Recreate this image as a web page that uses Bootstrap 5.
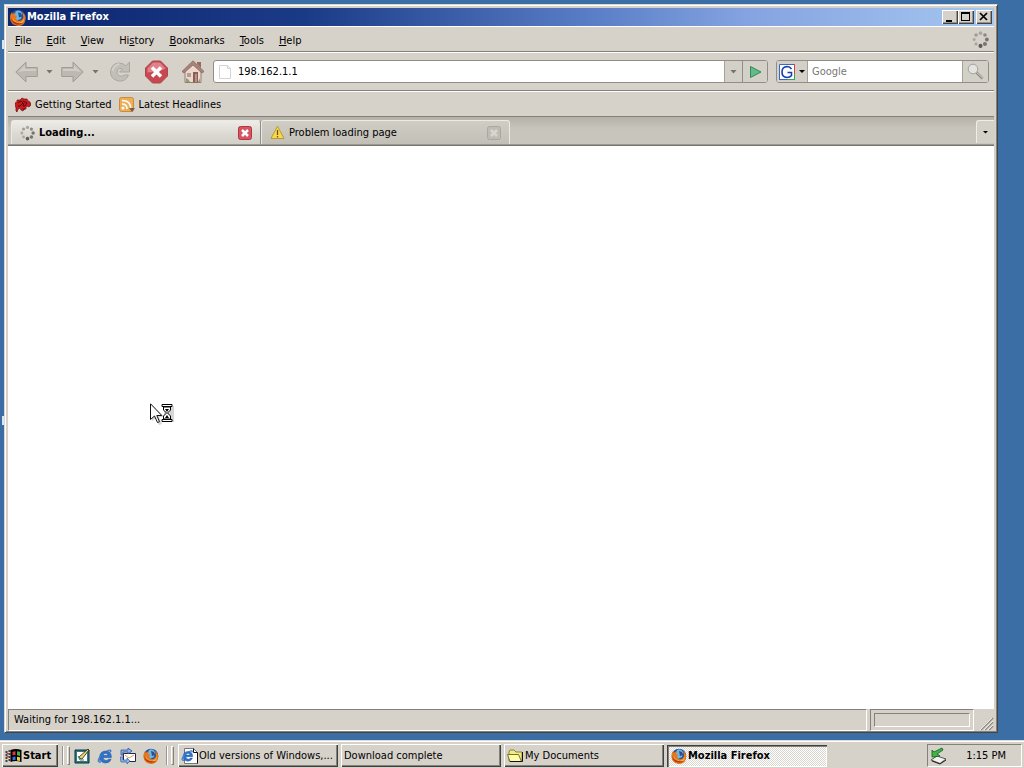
<!DOCTYPE html>
<html lang="en">
<head>
<meta charset="utf-8">
<meta name="viewport" content="width=device-width, initial-scale=1">
<title>Mozilla Firefox</title>
<link rel="stylesheet" href="https://cdn.jsdelivr.net/npm/bootstrap@5.3.0/dist/css/bootstrap.min.css">
<style>
:root{--face:#d6d2ca;--shade:#84817b;--dark:#444;--desk:#3a6ea5}
body{background:var(--desk);font:11px/14px "DejaVu Sans Condensed","DejaVu Sans",sans-serif;color:#000;overflow:hidden}
button,input{font:inherit;color:inherit;border:0;border-radius:0;padding:0;background:none}
button{white-space:nowrap}
a{color:inherit;text-decoration:none}
svg{display:block;flex:none}
.bold-ui{font-weight:700;font-size:11px}
.desktop{padding:4px 26px 7px 4px;min-height:0}
.desk-label{left:2px;width:2px;height:9px;background:#dce6f2}
.label-top{top:40px}
.label-mid{top:416px}
.app-window{background:var(--face);border:1px solid;border-color:#dcd9d2 var(--dark) var(--dark) #dcd9d2;box-shadow:inset 1px 1px #fff,inset -1px -1px var(--shade);padding:3px 3px 1px;min-height:0}
.titlebar{height:18px;background:linear-gradient(90deg,#0c2670,#1b3a86 30%,#5b80c8 60%,#85a3e0 75%,#a5c7f0);color:#fff;padding:0 2px 0 1px}
.winbtn{width:16px;height:14px;background:var(--face);box-shadow:inset 1px 1px #fff,inset -1px -1px var(--dark),inset -2px -2px #98948c}
.winbtn-max{margin-right:2px}
.menubar{height:26px;padding:4px 5px 0 7px;gap:15px;border-top:1px solid #fff;border-bottom:1px solid var(--shade)}
.tools{height:39px;padding:0 5px 0 7px;border-top:1px solid #fff;border-bottom:1px solid var(--shade)}
.caret-d{width:7px;height:4px;background:#000;clip-path:polygon(0 0,100% 0,50% 100%)}
.caret-s{width:6px;height:3px}
.caret-g{background:#77746e}
.field{height:23px;border:1px solid #918e87;border-radius:3px;background:#fff;overflow:hidden}
.field button{background:#d3d0c8}
.field input{outline:0;min-width:0;padding-top:1px}
.address{padding-left:6px}
.field input::placeholder{color:#777;opacity:1}
.drop{width:18px;border-left:1px solid #a5a29b}
.go{width:25px;border-left:1px solid #918e87}
.search{width:213px}
.engine{width:31px;border-right:1px solid #a5a29b}
.glass{width:26px;border-left:1px solid #a5a29b}
.bookbar{height:26px;padding:2px 7px 0;gap:7px;border-top:1px solid #fff;border-bottom:1px solid var(--shade)}
.tabstrip{height:29px;background:linear-gradient(#b5b1a9,#c7c4bb 40%,#c9c6be);border-bottom:1px solid #77746e;padding:3px 0 0 3px}
.page-tab{height:24px;border:1px solid #eceae5;border-bottom:0;border-radius:3px 3px 0 0;padding:0 8px}
.tab-on{width:250px;background:linear-gradient(#eeece8,#dbd8d1 60%,#d3d0c9);border-right-color:#908d86}
.tab-off{width:249px;background:linear-gradient(#d0cdc5,#c2bfb7)}
.tab-menu{width:18px;height:23px;border:1px solid #efede9;border-width:1px 0 0 1px;border-radius:3px 0 0 0;background:#d3d0c8}
.tab-base{height:3px;border-bottom:1px solid #77746e;margin-left:-3px;background:#d4d0c8;border-top:1px solid #9c9992}
.viewport{background:#fff;min-height:0}
.pointer{left:142px;top:257px}
.statusbar{height:22px;gap:3px}
.pane{border:1px solid;border-color:var(--shade) #fff #fff var(--shade)}
.status-text{padding-left:5px}
.progress-pane{width:104px;padding:3px}
.grip{width:17px}
.taskbar{height:28px;background:var(--face);border-top:1px solid #e0ddd6;box-shadow:inset 0 1px #fff;padding:3px 2px 1px}
.raised{height:23px;background:var(--face);box-shadow:inset 1px 1px #fff,inset -1px -1px #404040,inset -2px -2px var(--shade)}
.start{width:56px;padding:0 3px}
.quick{gap:7px;margin-right:7px}
.tasks{gap:3px}
.task{width:160px;padding:0 3px}
.pressed{height:22px;background:repeating-conic-gradient(#fff 0 25%,#d9d6d0 0 50%) 0 0/2px 2px;box-shadow:inset 1px 1px #404040,inset 2px 2px var(--shade),inset -1px -1px #fff}
.divider{width:2px;height:19px;border-left:1px solid #99958e;border-right:1px solid #fff}
.handle{width:3px;height:19px;margin:0 4px 0 3px;border:1px solid #fff;border-right-color:var(--shade);border-bottom-color:var(--shade)}
.tray{width:95px;height:23px;padding:0 15px 0 2px}
</style>
</head>
<body class="vh-100 d-flex flex-column">
<svg width="0" height="0" class="position-absolute" aria-hidden="true">
<defs>
<symbol id="fox" viewBox="0 0 16 16">
<circle cx="8" cy="8" r="7.3" fill="#28539b"/><path d="M6 2q4-2 6 2l-1 5-4 2-3-4z" fill="#6cb6df"/><path d="M8 3l3 1 1 3-3 1z" fill="#294f91"/>
<path d="M2 3l1 2q1-2 3-1L5 6l2 1-1 2q1 3 4 2 3-1 3-4l-1-4q4 3 3 7-1 6-7 6Q1 15 .5 9 .4 5 2 3z" fill="#e7771b"/>
<path d="M13 5q2 3-.5 6-3 3-6 1-3-1-3-4-1 4 3 6 5 1 7-3 1-4-.5-6z" fill="#f8bc43"/><path d="M1 7q0 5 4 7 5 2 8-1-5 1-8-1Q1 10 1 7z" fill="#ba3714"/>
</symbol>
<symbol id="spin" viewBox="0 0 16 16"><g fill="#77756f"><circle cx="8" cy="2" r="1.7" fill="#aaa7a1"/><circle cx="12.2" cy="3.8" r="1.7" fill="#8c8983"/><circle cx="14" cy="8" r="1.8"/><circle cx="12.2" cy="12.2" r="1.9"/><circle cx="8" cy="14" r="1.9" fill="#5d5b57"/><circle cx="3.8" cy="12.2" r="1.5" fill="#aaa7a1"/><circle cx="2" cy="8" r="1.5" fill="#aaa7a0"/><circle cx="3.8" cy="3.8" r="1.6" fill="#9f9c96"/></g></symbol>
<symbol id="arrow" viewBox="0 0 23 22"><path d="M.8 11L11 1v5.500h11.300v9H11V21z" fill="#bcb9b2" stroke="#a09d97"/><path d="M3 11l7-7v4h11v2H9z" fill="#d0cdc7"/></symbol>
<symbol id="ie" viewBox="0 0 16 16"><path d="M14.400 9.500H6q.4 3 3 3 2 0 2.600-1.300h2.500Q12.800 15 8.500 15 3 14.700 2.600 9 3 3.300 8.500 3q6 .3 5.900 6.500zM6 7.500h5Q10.800 5.300 8.500 5.300 6.300 5.300 6 7.500z" fill="#2d74cf" stroke="#174a9d" stroke-width=".5"/><path d="M13.500 4.300Q15.500 1 11.500 2.200 5 4.300 1.800 10-.5 15.300 4 14 1.500 14.600 2.700 11 6 4.500 11.700 2.800 14 2.200 13.500 4.300z" fill="#57a8e8" stroke="#1c5ab0" stroke-width=".6"/></symbol>
</defs>
</svg>

<main class="desktop position-relative flex-grow-1 d-flex">
<span class="desk-label label-top position-absolute"></span>
<span class="desk-label label-mid position-absolute"></span>
<section class="app-window flex-grow-1 d-flex flex-column position-relative">
<header class="titlebar d-flex align-items-center">
<svg width="18" height="17"><use href="#fox"/></svg><span class="bold-ui me-auto">Mozilla Firefox</span>
<button class="winbtn" aria-label="Minimize"><svg width="16" height="14"><path d="M4 10h6v2H4z"/></svg></button>
<button class="winbtn winbtn-max" aria-label="Maximize"><svg width="16" height="14"><path d="M3 2h9v9H3zM4 4v6h7V4z" fill-rule="evenodd"/></svg></button>
<button class="winbtn" aria-label="Close"><svg width="16" height="14"><path d="M4 3l7 7M11 3l-7 7" stroke="#000" stroke-width="1.700"/></svg></button>
</header>
<nav class="menubar d-flex align-items-center">
<button><u>F</u>ile</button><button><u>E</u>dit</button><button><u>V</u>iew</button><button>Hi<u>s</u>tory</button><button><u>B</u>ookmarks</button><button><u>T</u>ools</button><button><u>H</u>elp</button>
<svg class="ms-auto mb-1" width="17" height="17"><use href="#spin"/></svg>
</nav>
<div class="tools d-flex align-items-center gap-2">
<div class="d-flex align-items-center flex-shrink-0">
<button class="me-2" aria-label="Back"><svg width="23" height="22"><use href="#arrow"/></svg></button>
<button class="me-2" aria-label="Back history"><span class="caret-d caret-g d-block"></span></button>
<button class="me-2" aria-label="Forward"><svg width="23" height="22"><use href="#arrow" transform="matrix(-1 0 0 1 23 0)"/></svg></button>
<button class="me-2" aria-label="Forward history"><span class="caret-d caret-g d-block"></span></button>
<button class="me-2 pe-1" aria-label="Reload"><svg width="25" height="24" viewBox="0 0 24 24"><path d="M16 4l2 2 4-4v10H12l3-3q-3-2-5 1-2 4 2 6 3 1 5-1h4q-3 7-10 6-8-2-8-9 1-9 9-9z" fill="#c2bfb8" stroke="#aaa7a0"/><path d="M5 11q1-6 7-7" stroke="#d2cfc9" fill="none" stroke-width="2"/></svg></button>
<button class="me-2 pe-1" aria-label="Stop"><svg width="25" height="24" viewBox="0 0 24 24"><path d="M8 1h8l7 7v8l-7 7H8l-7-7V8z" fill="#c9474f" stroke="#a84a50"/><path d="M8.500 2.500h7L21 8.500q-6 3-18 4v-4z" fill="#df8388"/><path d="M7.500 7.500l9 9M16.500 7.500l-9 9" stroke="#fff" stroke-width="3.500"/></svg></button>
<button aria-label="Home"><svg width="24" height="24" viewBox="0 0 24 24"><path d="M4 10l8-8 8 8v12.500H4z" fill="#ecd8cf" stroke="#947c72"/><path d="M16 2h4v6l-4-4z" fill="#986a5f"/><path d="M1 11.500L12 .8l11 10.700-2 1.500-9-8-9 8z" fill="#a98479" stroke="#7c605a" stroke-width=".7"/><path d="M6 13h4v4H6z" fill="#b79a90"/><path d="M12 12h5v10.500h-5z" fill="#8b5f57"/><path d="M14 14h2v8h-2z" fill="#ba9185"/><path d="M5 22v-4q3 1 4 4zM19 22v-4l-2 4z" fill="#89a36f"/></svg></button>
</div>
<div class="field flex-grow-1 d-flex">
<svg class="ms-1 my-1" width="14" height="14"><path d="M1.500.5h8l3 3v10h-11zM9.500.5v3h3" fill="#fff" stroke="#d5d3d3"/></svg>
<input class="address flex-grow-1" aria-label="Address" value="198.162.1.1">
<button class="drop d-flex align-items-center justify-content-center" aria-label="Show addresses"><span class="caret-d caret-g"></span></button>
<button class="go d-flex align-items-center justify-content-center" aria-label="Go"><svg width="13" height="14"><path d="M1.500 1.500L12 7 1.500 12.500z" fill="#62bd85" stroke="#33875a"/></svg></button>
</div>
<div class="field search d-flex">
<button class="engine d-flex align-items-center justify-content-center gap-1" aria-label="Search engine"><svg width="16" height="16"><path fill="#fff" d="M0 0h16v16H0z"/><path d="M.5 16V.5H16" stroke="#3966c4" fill="none"/><path d="M15.500 0v10" stroke="#ce4437"/><path d="M15.500 10v6M8 15.500h8" stroke="#37a25a"/><path d="M0 15.500h8" stroke="#3966c4"/><path d="M12.500 5Q11 2.500 8 2.500 3 2.800 3 8q0 5.200 5 5.500 3 0 4.500-2V8.500H8.500" stroke="#1d3eaa" stroke-width="1.600" fill="none"/></svg><span class="caret-d caret-s"></span></button>
<input class="flex-grow-1 ps-1" aria-label="Search" placeholder="Google">
<button class="glass d-flex align-items-center justify-content-center" aria-label="Search"><svg width="17" height="17"><path d="M9.500 9.500l6 6" stroke="#8c8984" stroke-width="2.500"/><path d="M10 9.500l5.500 5.500" stroke="#dedcd8"/><circle cx="6" cy="6" r="4.800" fill="#e4e3e0" stroke="#a4a19d"/></svg></button>
</div>
</div>
<nav class="bookbar d-flex align-items-center">
<a href="#" class="d-flex align-items-center"><svg class="me-1" width="16" height="16" viewBox="0 0 16 16"><path d="M0 6l2-1 0-2 3 0L7 1l2 1 3 0 1 2 2 1 1 3-2 2-2-1-1 1 0 2-2 0-1 2-2-1-1-2-2 1-1 3-1-1 0-4-2-1 1-2z" fill="#ca1c20" stroke="#6c1012" stroke-width=".7"/><path d="M3 6l3-2 2 2-3 3-2 0M8 4l4 2-2 3-2 0 1-3M9 11v2" stroke="#550b0c" fill="none"/></svg>Getting Started</a>
<a href="#" class="d-flex align-items-center"><svg class="me-1" width="16" height="16" viewBox="0 0 16 16"><rect x=".5" y=".5" width="14" height="14" rx="2" fill="#edae55" stroke="#cb8a3c"/><circle cx="4" cy="11" r="1.500" fill="#fff"/><path d="M3 7q5 0 5 5M3 3.500q9 0 8.700 8.500" stroke="#fff" stroke-width="1.700" fill="none"/><path d="M10 11h6l-3 4z" fill="#775c49"/></svg>Latest Headlines</a>
</nav>
<div class="tabstrip d-flex flex-column">
<div class="d-flex">
<button class="page-tab tab-on d-flex align-items-center"><svg class="me-1" width="15" height="16"><use href="#spin"/></svg><span class="bold-ui me-auto">Loading...</span><svg width="14" height="14" role="img" aria-label="Close tab"><rect x=".5" y=".5" width="13" height="13" rx="2" fill="#d65561" stroke="#ae3543"/><path d="M4 4l6 6M10 4l-6 6" stroke="#fff" stroke-width="2.500"/></svg></button>
<button class="page-tab tab-off d-flex align-items-center"><svg class="me-1" width="15" height="15"><path d="M7.500 1.200L14 13.500H1z" fill="#f6da47" stroke="#be9832" stroke-linejoin="round"/><path d="M7.500 5v5M7.500 11v1.500" stroke="#64551f" stroke-width="1.300"/></svg><span class="me-auto">Problem loading page</span><svg width="14" height="14" role="img" aria-label="Close tab"><rect x=".5" y=".5" width="13" height="13" rx="2" fill="#bfbcb5" stroke="#aaa7a0"/><path d="M4 4l6 6M10 4l-6 6" stroke="#d9d6d0" stroke-width="2.500"/></svg></button>
<button class="tab-menu ms-auto d-flex align-items-center justify-content-center" aria-label="List all tabs"><span class="caret-d caret-s"></span></button>
</div>
<div class="tab-base"></div>
</div>
<article class="viewport flex-grow-1 position-relative">
<svg class="pointer position-absolute" width="25" height="23" viewBox="0 0 25 23"><g opacity=".3" transform="translate(2 2)"><path d="M0 0v16l4-3 3 7 3-1-3-7h5zM12 1h10v16H12z" fill="#777"/></g><path d="M.5.800v15.700l4-3.500 3 6.500 2-.8-2.700-6.200h5z" fill="#fff" stroke="#111"/><path d="M12 1.500h10v2H12zM12 16.500h10v2H12z" fill="#fff" stroke="#000"/><path d="M13.500 4v3l3 3-3 3v3h7v-3l-3-3 3-3V4z" fill="#fff" stroke="#000"/><path d="M15 6h4l-2 3zM15 15l2-3 2 3z"/></svg>
</article>
<footer class="statusbar d-flex">
<div class="pane status-text flex-grow-1 d-flex align-items-center">Waiting for 198.162.1.1...</div>
<div class="pane progress-pane"><div class="pane h-100"></div></div>
<div class="grip d-flex align-items-end justify-content-end"><svg width="14" height="14"><path d="M1 13L13 1M5 13l8-8M9 13l4-4" stroke="#8e8a83" stroke-width="1.500"/><path d="M0 13L12 1M4 13l9-9M8 13l5-5" stroke="#fff" stroke-width=".7"/></svg></div>
</footer>
</section>
</main>

<footer class="taskbar d-flex align-items-center flex-shrink-0">
<button class="raised start bold-ui d-flex align-items-center me-1"><svg width="18" height="16" viewBox="0 0 17 16"><path d="M5 2q5-2 11 0v12q-6-2-11 0z"/><path d="M7 4q2-1 3-.8V7q-2-.3-3 .3z" fill="#dc3937"/><path d="M11.500 3.200l3 .5V8l-3-.8z" fill="#47ad47"/><path d="M7 9q2-.8 3-.5V12q-2-.3-3 .3z" fill="#416be0"/><path d="M11.500 8.700l3 .6V13l-3-.6z" fill="#edce39"/><path d="M0 4h2M3 3h2M0 7h2M3 6h2M0 10h2M3 9h2M0 13h2M3 12h2" stroke="#111" stroke-width="1.500"/><path d="M1 5.500h3M1 8.500h3" stroke="#c53c3c"/></svg>Start</button>
<span class="divider"></span><span class="handle"></span>
<nav class="quick d-flex align-items-center">
<button aria-label="Show Desktop"><svg width="16" height="16"><path d="M1 2h14v13H1z" fill="#2c7c8a" stroke="#112e34"/><path d="M3 4h10v9H3z" fill="#fff"/><path d="M5 10l3 1 7-9-1-1-9 8z" fill="#efd26c" stroke="#222" stroke-width=".8"/><path d="M4 8l2 4 4 0" stroke="#467f53" fill="none"/></svg></button>
<button aria-label="Internet Explorer"><svg width="16" height="16"><use href="#ie"/></svg></button>
<button aria-label="Outlook Express"><svg width="16" height="16"><path d="M3.500 5.500h12v8h-12z" fill="#fff" stroke="#242451"/><path d="M5 7l4 3 5-3" stroke="#d5ac38" fill="none"/><path d="M1 7V2h7V0l4 3-4 3V4H3v3z" fill="#8bb2ee" stroke="#22468d" stroke-width=".7"/><path d="M0 9h3v3h4v-2l3 3-3 3v-2H1z" fill="#8bb2ee" stroke="#22468d" stroke-width=".6"/></svg></button>
<button aria-label="Firefox"><svg width="16" height="16"><use href="#fox"/></svg></button>
</nav>
<span class="divider"></span><span class="handle"></span>
<div class="tasks d-flex align-items-center flex-grow-1">
<button class="raised task d-flex align-items-center"><svg width="18" height="16"><path d="M3.500.5h9l4 4v11h-13z" fill="#fff" stroke="#777"/><path d="M12.500.5v4h4v11" stroke="#111" fill="none"/><use href="#ie" width="13" height="13" y="1"/></svg>Old versions of Windows,...</button>
<button class="raised task d-flex align-items-center">Download complete</button>
<button class="raised task d-flex align-items-center"><svg width="18" height="16"><path d="M2 13V4l1-2h4l2 2h6v9z" fill="#f0eb86" stroke="#8c8634"/><path d="M.5 6.500h11l3 7H3z" fill="#fffca9" stroke="#77712a"/><path d="M15.500 4v9.500H3" stroke="#111" fill="none"/></svg>My Documents</button>
<button class="pressed task bold-ui d-flex align-items-center"><svg width="18" height="16"><use href="#fox"/></svg>Mozilla Firefox</button>
</div>
<div class="pane tray d-flex align-items-center justify-content-between"><svg width="17" height="18"><path d="M1 13l6-4 9 3-6 4.500z" fill="#f1f1ec" stroke="#555"/><path d="M2 14l8 3 6-4" stroke="#222" fill="none"/><path d="M2 10V3l2 2 8-4 1 2-6 4 3 2z" fill="#3eb842" stroke="#145b20" stroke-width=".8"/></svg><time>1:15 PM</time></div>
</footer>
<script src="https://cdn.jsdelivr.net/npm/bootstrap@5.3.0/dist/js/bootstrap.bundle.min.js"></script>
</body>
</html>
